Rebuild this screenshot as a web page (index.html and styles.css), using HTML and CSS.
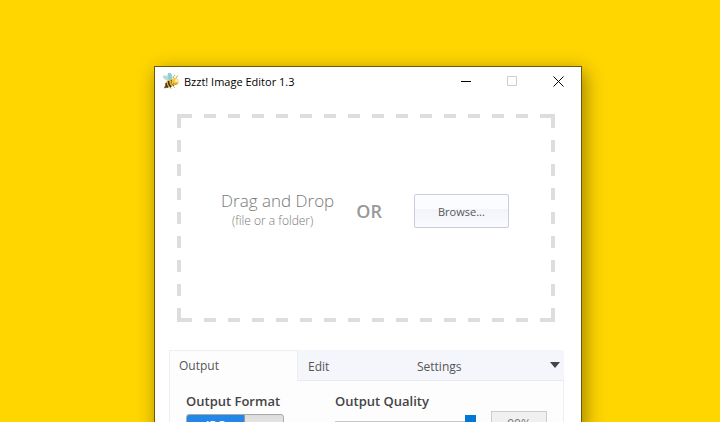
FILE: index.html
```html
<!DOCTYPE html>
<html lang="en">
<head>
    <meta charset="UTF-8">
    <meta name="viewport" content="width=device-width, initial-scale=1.0">
    <title>Bzzt! Image Editor</title>
    <link rel="stylesheet" href="styles.css">
</head>
<body>
    <main class="window">
        <header class="titlebar">
            <svg class="bee" viewBox="0 0 32 32" aria-hidden="true">
                <ellipse cx="7" cy="10" rx="4" ry="8" transform="rotate(-58 7 10)" fill="#b5dedb"/>
                <ellipse cx="14" cy="7" rx="4.500" ry="8" transform="rotate(-12 14 7)" fill="#93cdd0"/>
                <ellipse cx="14" cy="21" rx="10" ry="7.500" transform="rotate(-30 14 21)" fill="#e3b23a"/>
                <path d="M6 20q0 6 4 9M11 16q0 8 5 12M17 14q0 7 5 11" fill="none" stroke="#3a2a12" stroke-width="2.800"/>
                <path d="M5 25l-2 5 6-2zM15 29l1 2M21 27l2 2" stroke="#5a4520" stroke-width="1.500" fill="#5a4520"/>
                <circle cx="24" cy="17" r="7" fill="#f6c93c"/>
                <circle cx="27" cy="15" r="3" fill="#fff3b8"/>
                <path d="M20 20q4 5 9 1" stroke="#a87a18" stroke-width="1.500" fill="none"/>
                <path d="M21 10q0-4 3-6M26 10q1-4 4-4" stroke="#9a8a4e" stroke-width="1.500" fill="none"/>
            </svg>
            <h1 class="title">Bzzt! Image Editor 1.3</h1>
            <button class="winbtn" type="button" aria-label="Minimize">
                <svg viewBox="0 0 11 11"><path d="M0 5.500h10" stroke="#000"/></svg>
            </button>
            <button class="winbtn" type="button" aria-label="Maximize" disabled>
                <svg viewBox="0 0 11 11"><path d="M.5.5h9v9h-9z" fill="none" stroke="#ccc"/></svg>
            </button>
            <button class="winbtn" type="button" aria-label="Close">
                <svg viewBox="0 0 11 11"><path d="M.5.5l10 10M10.500.5l-10 10" stroke="#000"/></svg>
            </button>
        </header>

        <section class="dropzone">
            <div class="hint">
                <p class="hint-main">Drag and Drop</p>
                <p class="hint-sub">(file or a folder)</p>
            </div>
            <span class="or">OR</span>
            <button class="browse" type="button">Browse...</button>
        </section>

        <section class="settings">
            <nav class="tabs" role="tablist">
                <button class="tab active" type="button" role="tab" aria-selected="true">Output</button>
                <button class="tab" type="button" role="tab" aria-selected="false">Edit</button>
                <button class="tab" type="button" role="tab" aria-selected="false">Settings</button>
                <button class="more" type="button" aria-label="More">
                    <svg viewBox="0 0 10 6"><path d="M0 0h10L5 6z" fill="#444"/></svg>
                </button>
            </nav>
            <div class="panel" role="tabpanel">
                <div class="field format">
                    <label class="label" for="format">Output Format</label>
                    <div class="toggle">
                        <input id="format" type="checkbox" checked>
                        <span class="toggle-on">JPG</span>
                    </div>
                </div>
                <div class="field quality">
                    <label class="label" for="quality">Output Quality</label>
                    <input id="quality" class="slider" type="range" min="0" max="90" value="90">
                </div>
                <input class="percent" type="text" value="90%" aria-label="Quality percent" readonly>
            </div>
        </section>
    </main>
</body>
</html>
```
FILE: styles.css
```css
* {margin: 0; padding: 0; box-sizing: border-box;}
html {
    height: 100%;
    overflow: hidden;
}
body {
    min-height: 100%;
    padding: 66px 138px 0 154px;
    background-color: #ffd600;
    font-family: "Open Sans", "Noto Sans", sans-serif;
    font-size: 12px;
    color: #555;
}
button, input {
    font: inherit;
    color: inherit;
}
button {
    border: none;
    background: none;
}
.window {
    border: 1px solid #6b5b08;
    background-color: #fff;
    box-shadow: 3px 5px 18px rgba(0,0,0,0.4);
}

/* title bar */
.titlebar {
    display: flex;
    align-items: center;
    height: 28px;
    padding-left: 8px;
}
.bee {
    width: 16px;
    height: 16px;
}
.title {
    flex: 1;
    margin-left: 5px;
    font-size: 11px;
    font-weight: 400;
    color: #000;
}
.winbtn {
    display: flex;
    align-items: center;
    justify-content: center;
    width: 46px;
    height: 28px;
}
.winbtn svg {
    width: 11px;
    height: 11px;
}

/* drop area, dashed frame */
.dropzone {
    --dash: #ddd;
    display: flex;
    align-items: center;
    justify-content: center;
    min-height: 208px;
    margin: 19px 26px 28px 22px;
    padding: 0 2px 14px 0;
    color: #999;
    background:
        linear-gradient(var(--dash), var(--dash)) 0 0 / 4px 4px no-repeat,
        linear-gradient(var(--dash), var(--dash)) 100% 0 / 4px 4px no-repeat,
        linear-gradient(var(--dash), var(--dash)) 0 100% / 4px 4px no-repeat,
        linear-gradient(var(--dash), var(--dash)) 100% 100% / 4px 4px no-repeat,
        linear-gradient(90deg, var(--dash) 50%, transparent 50%) 3px 0 / 24px 4px repeat-x,
        linear-gradient(90deg, var(--dash) 50%, transparent 50%) 3px 100% / 24px 4px repeat-x,
        linear-gradient(var(--dash) 50%, transparent 50%) 0 2px / 4px 24px repeat-y,
        linear-gradient(var(--dash) 50%, transparent 50%) 100% 2px / 4px 24px repeat-y;
}
.hint {
    text-align: center;
}
.hint-main {
    font-size: 17px;
    line-height: 20px;
    font-weight: 300;
    color: #777;
}
.hint-sub {
    padding-right: 10px;
    font-size: 12px;
    line-height: 20px;
    font-weight: 300;
    color: #777;
}
.or {
    margin: 0 32px 0 22px;
    font-size: 18px;
    font-weight: 600;
}
.browse {
    width: 95px;
    height: 34px;
    border: 1px solid #c9ccda;
    border-radius: 2px;
    background: linear-gradient(#fbfcff 45%, #f2f4f9 45%, #fafbfe);
    font-size: 11px;
    color: #555;
}

/* tabs */
.settings {
    margin: 0 17px 0 14px;
}
.tabs {
    display: flex;
    height: 31px;
    background-color: #f5f6fb;
    border-bottom: 1px solid #e8ebf3;
}
.tab {
    width: 109px;
    padding: 2px 0 0 10px;
    text-align: left;
}
.tab.active {
    width: 129px;
    height: 31px;
    padding: 0 0 1px 9px;
    border: 1px solid #eceef4;
    border-bottom: none;
    border-radius: 2px 2px 0 0;
    background-color: #fdfdfe;
}
.more {
    display: flex;
    align-items: center;
    margin-left: auto;
    padding-right: 4px;
}
.more svg {
    width: 10px;
    height: 6px;
}
.panel {
    display: flex;
    min-height: 90px;
    padding: 10px 16px;
    border: 1px solid #eceef4;
    border-top: none;
    background-color: #fdfdfe;
}
.field {
    display: flex;
    flex-direction: column;
}
.format {
    width: 149px;
}
.quality {
    width: 141px;
}
.label {
    margin-bottom: 3px;
    font-size: 13px;
    line-height: 20px;
    font-weight: 600;
    color: #444;
}

/* format switch */
.toggle {
    position: relative;
    width: 98px;
    height: 24px;
    border: 1px solid #aaa;
    border-radius: 3px;
    overflow: hidden;
    background: linear-gradient(#dcdcdc, #f4f4f4);
}
.toggle input {
    position: absolute;
    inset: 0;
    opacity: 0;
}
.toggle-on {
    display: block;
    width: 58px;
    height: 22px;
    border-right: 1px solid #999;
    background-color: #2287e8;
    line-height: 22px;
    text-align: center;
    font-weight: 600;
    color: #fff;
}

/* quality slider */
.slider {
    appearance: none;
    width: 100%;
    height: 16px;
    background: linear-gradient(#c8c8c8, #c8c8c8) 0 50% / 100% 2px no-repeat;
}
.slider::-webkit-slider-thumb {
    appearance: none;
    width: 11px;
    height: 14px;
    background-color: #0078d7;
}
.percent {
    width: 56px;
    height: 24px;
    margin: 20px 0 0 15px;
    border: 1px solid #ccc;
    background-color: #f0f0f0;
    text-align: center;
    color: #777;
}
```
